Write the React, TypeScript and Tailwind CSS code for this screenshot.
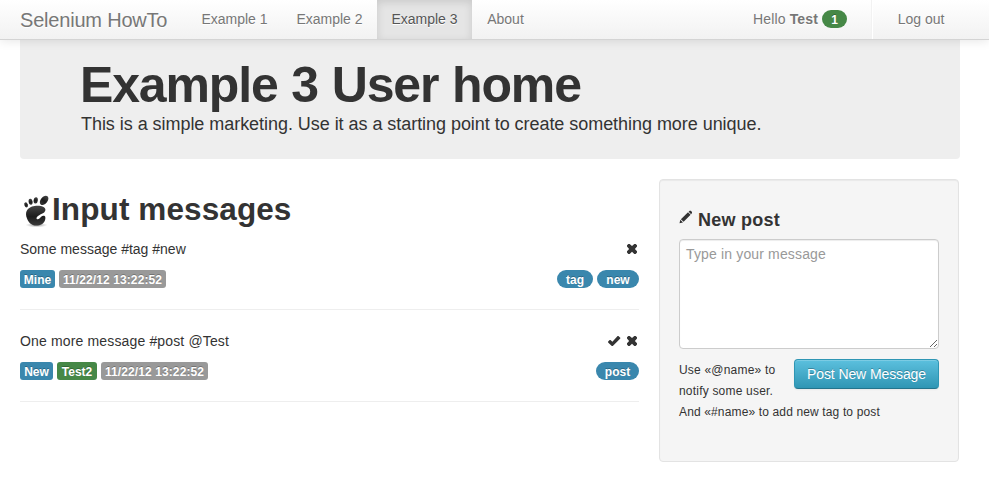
import React from 'react';

const navItem = 'flex h-10 items-center justify-center text-[14px] leading-5 [text-shadow:0_1px_0_#fff]';
const label =
  'flex h-[18px] items-center justify-center rounded-[3px] pt-px text-[12px] font-bold leading-[14px] text-white [text-shadow:0_-1px_0_rgba(0,0,0,0.25)]';
const pill =
  'flex h-[18px] items-center justify-center rounded-[9px] pt-px text-[12px] font-bold leading-[14px] text-white [text-shadow:0_-1px_0_rgba(0,0,0,0.25)]';

function RemoveIcon() {
  return (
    <svg width="14" height="14" viewBox="0 0 14 14" fill="#333">
      <path d="M3.3 2 L4.7 2 L7 4.1 L9.3 2 L10.7 2 L12 3.3 L12 4.6 L9.9 6.9 L12 9.2 L12 10.6 L10.7 11.9 L9.3 11.9 L7 9.8 L4.7 11.9 L3.3 11.9 L2 10.6 L2 9.2 L4.1 6.9 L2 4.6 L2 3.3 Z" />
    </svg>
  );
}

function OkIcon() {
  return (
    <svg width="14" height="14" viewBox="0 0 14 14" fill="#333">
      <path d="M11.4 2 L13.3 3.8 L13.3 4.6 L5.8 12.1 L4.8 12.1 L1.1 8.4 L1.1 7.6 L2.7 6 L3.5 6 L5.4 7.8 L10.6 2 Z" />
    </svg>
  );
}

function PencilIcon() {
  return (
    <svg width="14" height="14" viewBox="0 0 14 14" fill="#333">
      <path d="M0.5 13.3 L1.3 9.8 L4 12.4 Z M1.9 9.2 L9 2.3 L11.6 4.8 L4.6 11.7 Z M9.6 1.8 L10.7 0.8 L11.8 0.8 L13 2 L13 3 L12.1 4.2 Z" />
    </svg>
  );
}

function FootIcon() {
  return (
    <svg width="32" height="32" viewBox="0 0 32 32">
      <defs>
        <linearGradient id="foot" x1="0" y1="0" x2="0" y2="1">
          <stop offset="0" stopColor="#444" />
          <stop offset="0.55" stopColor="#1c1c1c" />
          <stop offset="1" stopColor="#3a3a3a" />
        </linearGradient>
        <radialGradient id="ground">
          <stop offset="0" stopColor="#555" stopOpacity="0.65" />
          <stop offset="1" stopColor="#777" stopOpacity="0" />
        </radialGradient>
      </defs>
      <ellipse cx="16.5" cy="30" rx="11" ry="2.4" fill="url(#ground)" />
      <g fill="url(#foot)">
        <ellipse cx="24.1" cy="5.4" rx="3.4" ry="5.3" transform="rotate(40 24.1 5.4)" />
        <ellipse cx="15.7" cy="5.4" rx="2.1" ry="3.2" transform="rotate(8 15.7 5.4)" />
        <ellipse cx="10.6" cy="6.8" rx="2" ry="3" transform="rotate(-8 10.6 6.8)" />
        <ellipse cx="6.1" cy="9.9" rx="1.7" ry="2.6" transform="rotate(-22 6.1 9.9)" />
        <path d="M12 11.6 C16.5 9.8 25.4 10.4 25.4 14.6 C25.4 18 22 18.8 19.2 20.2 C16.8 21.4 15.6 23.6 17.4 24.2 C19.6 24.8 20.4 21.4 23.2 20.8 C25.6 20.4 25.8 23 25 25.2 C23.8 28.6 20.4 30.6 16.2 30.5 C11.2 30.4 8.6 27.2 7 23.4 C4.8 18.2 6.4 13.8 12 11.6 Z" />
      </g>
    </svg>
  );
}

function Stamp() {
  return (
    <span className={label + ' w-[107px] bg-[#999] tracking-[0.1px]'}>
      <span>11/22/12 13:22:52</span>
    </span>
  );
}

export default function App() {
  return (
    <div className="h-[482px] w-[989px] overflow-hidden bg-white font-['Liberation_Sans',Arial,sans-serif] text-[14px] leading-5 text-[#333]">
      <header className="relative z-10 flex h-10 border-b border-[#d4d4d4] bg-linear-to-b from-white to-[#f2f2f2] pl-5 text-[#777] shadow-[0_1px_10px_rgba(0,0,0,0.1)]">
        <div className="flex h-10 w-[167px] items-center text-[20px] tracking-[-0.2px] [text-shadow:0_1px_0_#fff]">
          Selenium HowTo
        </div>
        <nav className="-mt-px flex">
          <a className={navItem + ' w-[95px]'}>Example 1</a>
          <a className={navItem + ' w-[95px]'}>Example 2</a>
          <a className={navItem + ' w-[95px] bg-[#e5e5e5] text-[#555] shadow-[inset_0_3px_8px_rgba(0,0,0,0.125)]'}>
            Example 3
          </a>
          <a className={navItem + ' w-[67px]'}>About</a>
        </nav>
        <div className="-mt-px ml-auto flex pr-[29px]">
          <a className={navItem + ' gap-1 pr-6'}>
            <span className="tracking-[0.15px]">
              Hello <b>Test</b>
            </span>
            <span className={pill + ' w-[25px] bg-[#468847]'}>1</span>
          </a>
          <div className="h-10 border-l border-r border-l-[#f2f2f2] border-r-white" />
          <a className={navItem + ' w-[87px] pl-[9px]'}>Log out</a>
        </div>
      </header>

      <main className="ml-5 w-[940px]">
        <section className="h-[119px] rounded-b-[4px] bg-[#eee] pl-[60px] pt-5">
          <h1 className="text-[50px] font-bold leading-[50px] tracking-[-1.15px] [word-spacing:1px]">
            Example 3 User home
          </h1>
          <p className="ml-px mt-px text-[18px] leading-[27px] tracking-[-0.045px]">
            This is a simple marketing. Use it as a starting point to create something more unique.
          </p>
        </section>

        <div className="flex gap-5 pt-5">
          <section className="w-[619px]">
            <div className="mt-[10px] flex h-10 items-center">
              <span className="mt-1">
                <FootIcon />
              </span>
              <h2 className="text-[31.5px] font-bold leading-10 tracking-[0.1px]">Input messages</h2>
            </div>

            <article className="mt-[10px] h-[71px] border-b border-[#eee]">
              <div className="flex justify-between">
                <p>Some message #tag #new</p>
                <span className="mt-[3px] flex">
                  <RemoveIcon />
                </span>
              </div>
              <div className="mt-[11px] flex gap-1">
                <span className={label + ' w-[35px] bg-[#3a87ad]'}>Mine</span>
                <Stamp />
                <span className={pill + ' ml-auto w-[36px] bg-[#3a87ad]'}>tag</span>
                <span className={pill + ' w-[42px] bg-[#3a87ad]'}>new</span>
              </div>
            </article>

            <article className="mt-[21px] h-[71px] border-b border-[#eee]">
              <div className="flex justify-between">
                <p className="tracking-[0.15px]">One more message #post @Test</p>
                <span className="mt-[3px] flex gap-1">
                  <OkIcon />
                  <RemoveIcon />
                </span>
              </div>
              <div className="mt-[11px] flex gap-1">
                <span className={label + ' w-[33px] bg-[#3a87ad]'}>New</span>
                <span className={label + ' w-[40px] bg-[#468847]'}>Test2</span>
                <Stamp />
                <span className={pill + ' ml-auto w-[43px] bg-[#3a87ad]'}>post</span>
              </div>
            </article>
          </section>

          <aside className="h-[283px] w-[300px] rounded-[4px] border border-[#e3e3e3] bg-[#f5f5f5] px-[19px] pt-[29px] shadow-[inset_0_1px_1px_rgba(0,0,0,0.05)]">
            <h4 className="flex h-5 items-center gap-[5px] text-[18px] font-bold leading-5 tracking-[0.25px]">
              <span className="-mt-[5px]">
                <PencilIcon />
              </span>
              <span className="mt-px">New post</span>
            </h4>
            <textarea
              className="mt-[10px] block h-[110px] w-[260px] resize rounded-[4px] border border-[#ccc] bg-white px-[6px] py-1 text-[14px] leading-5 tracking-[0.15px] shadow-[inset_0_1px_1px_rgba(0,0,0,0.075)] outline-none placeholder:text-[#999]"
              placeholder="Type in your message"
            />
            <div className="mt-[10px] flex justify-between text-[12px] leading-[21px] tracking-[0.14px]">
              <p className="h-[42px] w-[110px] pt-px tracking-[0.2px]">
                Use «@name» to
                <br />
                notify some user.
              </p>
              <button className="h-[30px] w-[145px] rounded-[4px] border border-[#2f96b4] border-b-[#24748c] bg-linear-to-b from-[#5bc0de] to-[#2f96b4] text-[14px] leading-5 tracking-[-0.1px] text-white shadow-[inset_0_1px_0_rgba(255,255,255,0.2),0_1px_2px_rgba(0,0,0,0.05)] [text-shadow:0_-1px_0_rgba(0,0,0,0.25)]">
                Post New Message
              </button>
            </div>
            <p className="pt-px text-[12px] leading-[21px] tracking-[0.14px]">And «#name» to add new tag to post</p>
          </aside>
        </div>
      </main>
    </div>
  );
}
